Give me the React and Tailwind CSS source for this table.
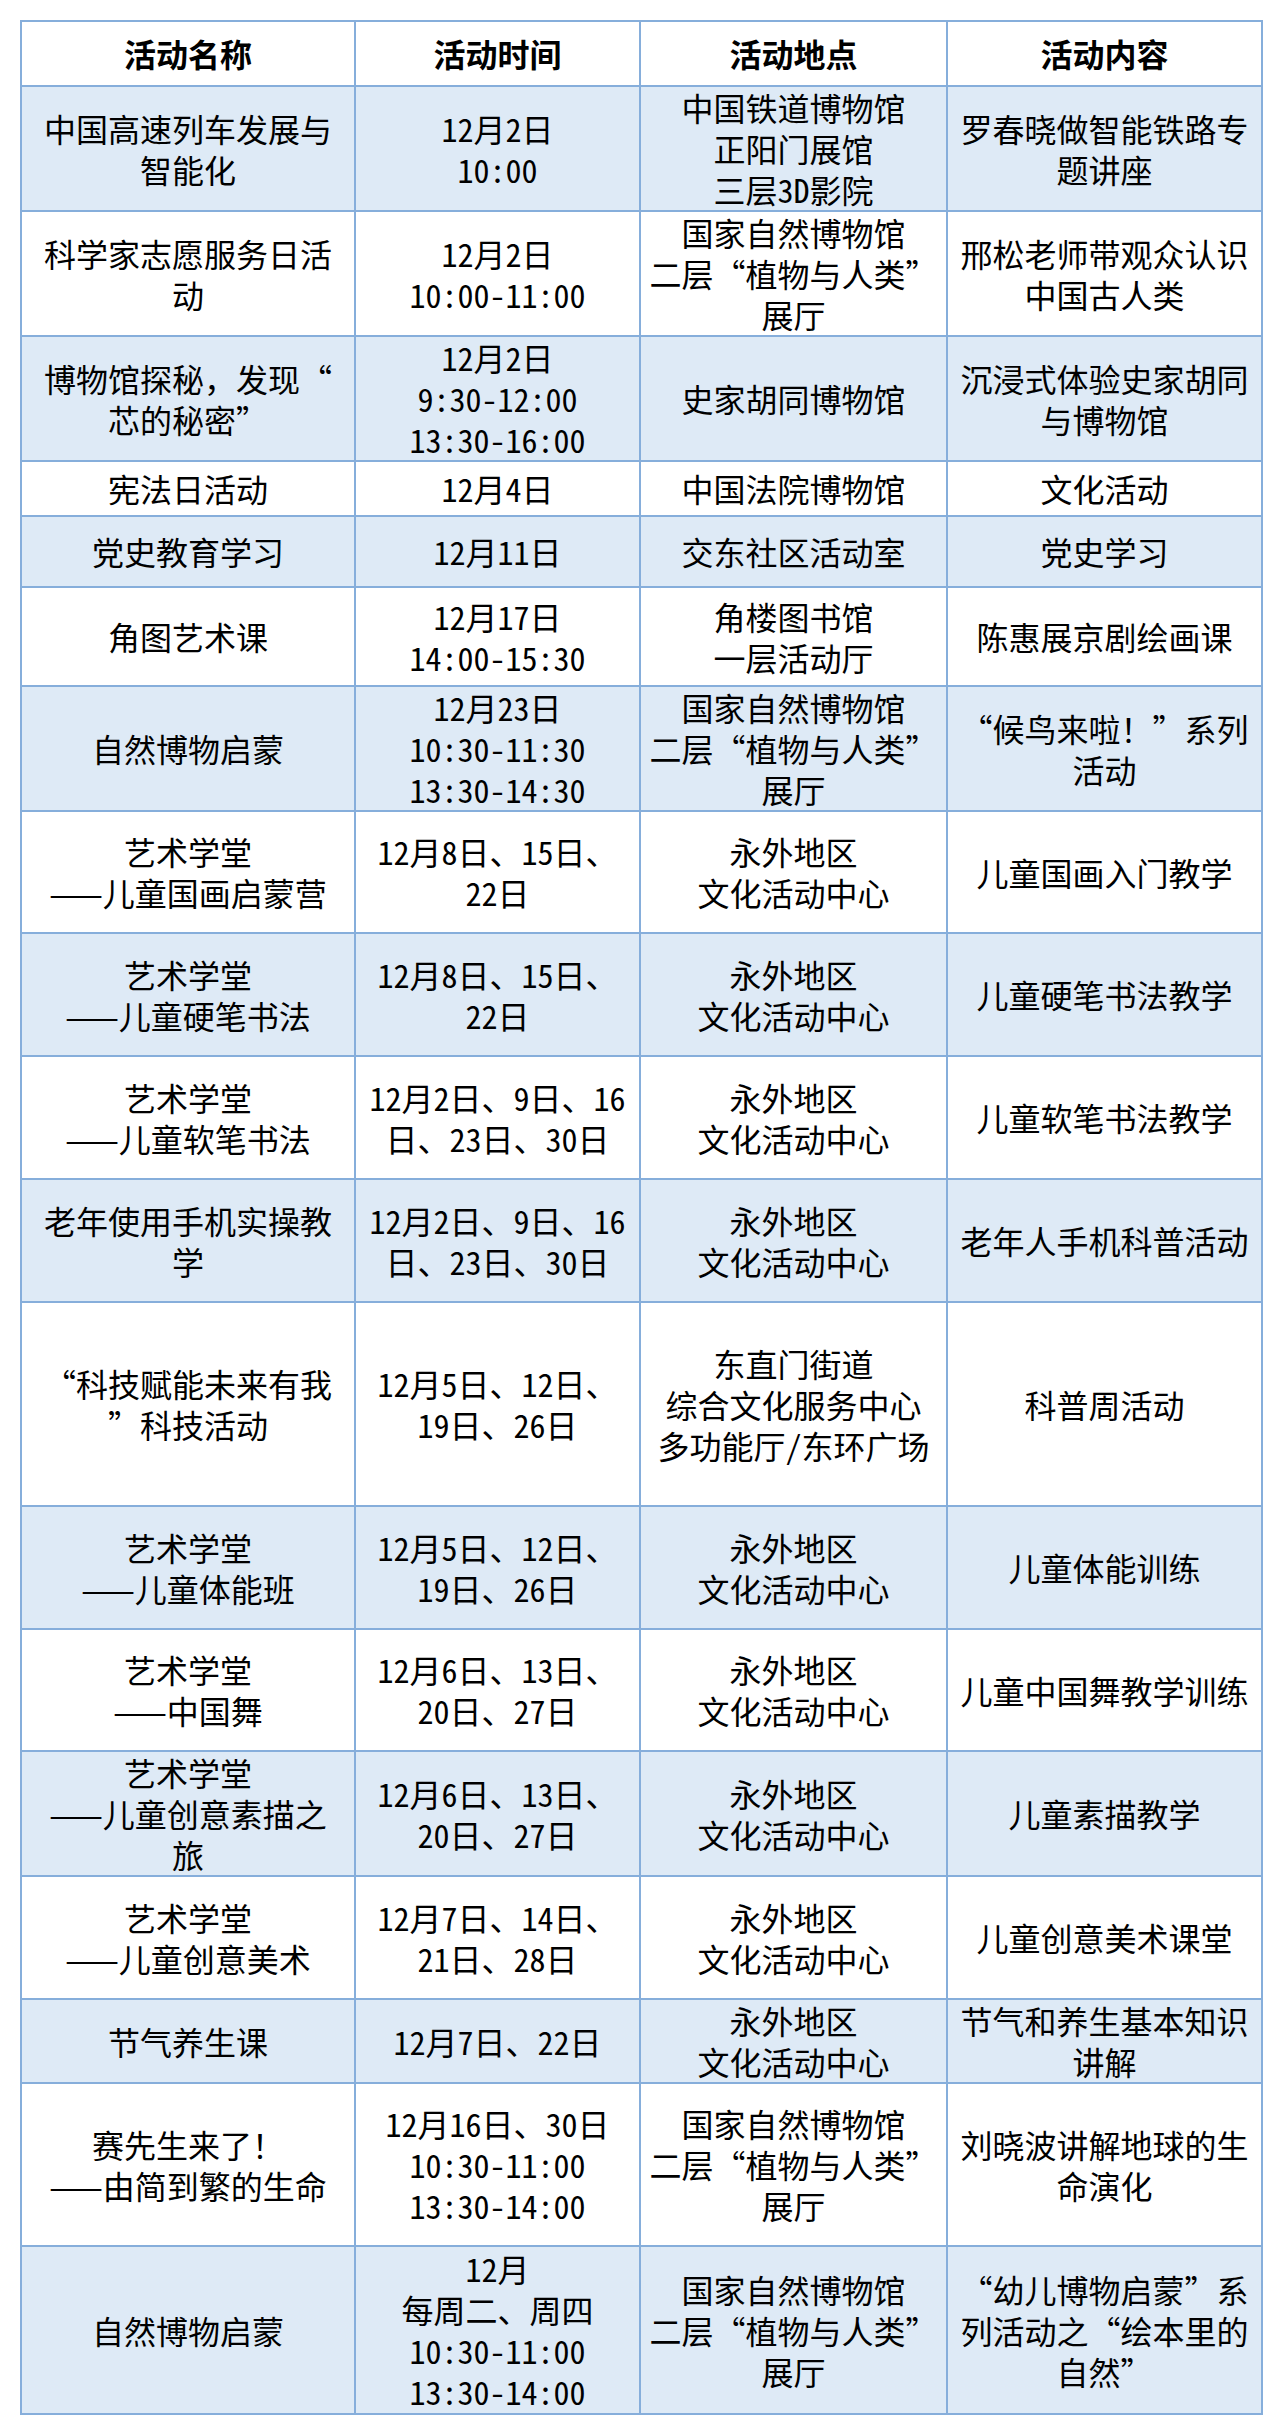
const YW = ["永外地区", "文化活动中心"]
const ZR = ["国家自然博物馆", "二层“植物与人类”", "展厅"]

const rows = [
  { h: "h-[123px]", name: ["中国高速列车发展与", "智能化"], time: ["12月2日", "10:00"], place: ["中国铁道博物馆", "正阳门展馆", "三层3D影院"], content: ["罗春晓做智能铁路专", "题讲座"] },
  { h: "h-[122px]", name: ["科学家志愿服务日活", "动"], time: ["12月2日", "10:00-11:00"], place: ZR, content: ["邢松老师带观众认识", "中国古人类"] },
  { h: "h-[123px]", name: ["博物馆探秘，发现“", "芯的秘密”"], time: ["12月2日", "9:30-12:00", "13:30-16:00"], place: ["史家胡同博物馆"], content: ["沉浸式体验史家胡同", "与博物馆"] },
  { h: "h-[55px]", name: ["宪法日活动"], time: ["12月4日"], place: ["中国法院博物馆"], content: ["文化活动"] },
  { h: "h-[71px]", name: ["党史教育学习"], time: ["12月11日"], place: ["交东社区活动室"], content: ["党史学习"] },
  { h: "h-[99px]", name: ["角图艺术课"], time: ["12月17日", "14:00-15:30"], place: ["角楼图书馆", "一层活动厅"], content: ["陈惠展京剧绘画课"] },
  { h: "h-[123px]", name: ["自然博物启蒙"], time: ["12月23日", "10:30-11:30", "13:30-14:30"], place: ZR, content: ["“候鸟来啦！”系列", "活动"] },
  { h: "h-[122px]", name: ["艺术学堂", "——儿童国画启蒙营"], time: ["12月8日、15日、", "22日"], place: YW, content: ["儿童国画入门教学"] },
  { h: "h-[123px]", name: ["艺术学堂", "——儿童硬笔书法"], time: ["12月8日、15日、", "22日"], place: YW, content: ["儿童硬笔书法教学"] },
  { h: "h-[123px]", name: ["艺术学堂", "——儿童软笔书法"], time: ["12月2日、9日、16", "日、23日、30日"], place: YW, content: ["儿童软笔书法教学"] },
  { h: "h-[123px]", name: ["老年使用手机实操教", "学"], time: ["12月2日、9日、16", "日、23日、30日"], place: YW, content: ["老年人手机科普活动"] },
  { h: "h-[204px]", name: ["“科技赋能未来有我", "”科技活动"], time: ["12月5日、12日、", "19日、26日"], place: ["东直门街道", "综合文化服务中心", "多功能厅/东环广场"], content: ["科普周活动"] },
  { h: "h-[123px]", name: ["艺术学堂", "——儿童体能班"], time: ["12月5日、12日、", "19日、26日"], place: YW, content: ["儿童体能训练"] },
  { h: "h-[122px]", name: ["艺术学堂", "——中国舞"], time: ["12月6日、13日、", "20日、27日"], place: YW, content: ["儿童中国舞教学训练"] },
  { h: "h-[123px]", name: ["艺术学堂", "——儿童创意素描之", "旅"], time: ["12月6日、13日、", "20日、27日"], place: YW, content: ["儿童素描教学"] },
  { h: "h-[123px]", name: ["艺术学堂", "——儿童创意美术"], time: ["12月7日、14日、", "21日、28日"], place: YW, content: ["儿童创意美术课堂"] },
  { h: "h-[82px]", name: ["节气养生课"], time: ["12月7日、22日"], place: YW, content: ["节气和养生基本知识", "讲解"] },
  { h: "h-[163px]", name: ["赛先生来了！", "——由简到繁的生命"], time: ["12月16日、30日", "10:30-11:00", "13:30-14:00"], place: ZR, content: ["刘晓波讲解地球的生", "命演化"] },
  { h: "h-[168px]", name: ["自然博物启蒙"], time: ["12月", "每周二、周四", "10:30-11:00", "13:30-14:00"], place: ZR, content: ["“幼儿博物启蒙”系", "列活动之“绘本里的", "自然”"] },
]

// half-width digits / latin like the original song-style doc font
function Line({ text }) {
  const parts = text.split(/([\x21-\x7e]+)/)
  return (
    <div className="whitespace-nowrap">
      {parts.map((p, i) =>
        /^[\x21-\x7e]+$/.test(p)
          ? <span key={i} className="[font-feature-settings:'hwid']">{p}</span>
          : p
      )}
    </div>
  )
}

function Lines({ lines }) {
  return lines.map((l, i) => <Line key={i} text={l} />)
}

const cell = "border-2 border-[#86aedb] text-center align-middle p-0"

export default function App() {
  return (
    <div className="w-[1280px] h-[2418px] bg-white pt-[20px] pl-[20px] text-black font-['Noto_Sans_CJK_SC',sans-serif] text-[32px] leading-[41px]">
      <table className="table-fixed border-collapse w-[1241px]">
        <colgroup>
          <col className="w-[334px]" />
          <col className="w-[285px]" />
          <col className="w-[307px]" />
          <col className="w-[315px]" />
        </colgroup>
        <thead>
          <tr className="h-[65px]">
            {["活动名称", "活动时间", "活动地点", "活动内容"].map((t) => (
              <th key={t} className={cell + " font-bold"}>{t}</th>
            ))}
          </tr>
        </thead>
        <tbody>
          {rows.map((r, i) => (
            <tr key={i} className={r.h + (i % 2 === 0 ? " bg-[#deeaf6]" : " bg-white")}>
              <td className={cell}><Lines lines={r.name} /></td>
              <td className={cell}><Lines lines={r.time} /></td>
              <td className={cell}><Lines lines={r.place} /></td>
              <td className={cell}><Lines lines={r.content} /></td>
            </tr>
          ))}
        </tbody>
      </table>
    </div>
  )
}
